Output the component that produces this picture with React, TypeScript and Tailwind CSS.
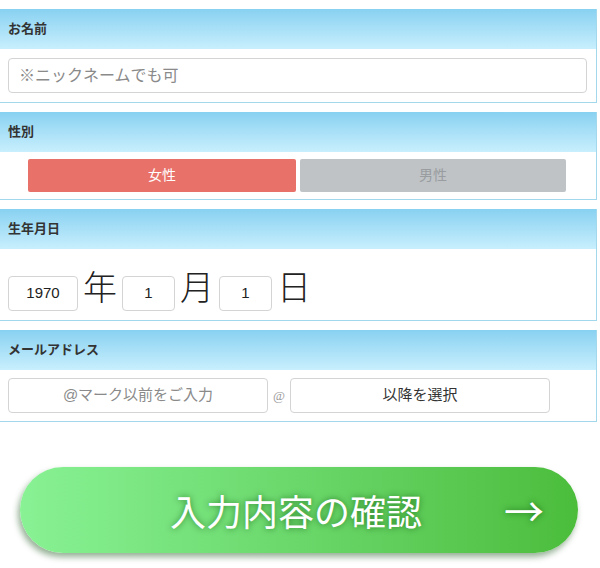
import React from "react";

const SANS = "font-['Liberation_Sans','Noto_Sans_CJK_JP',sans-serif]";
const SERIF = "font-['Liberation_Serif','Noto_Sans_CJK_JP',serif]";
const CJK = "font-['Noto_Sans_CJK_JP',sans-serif]";

function Header({ label }: { label: string }) {
  return (
    <div
      className={`flex h-[40px] items-center bg-gradient-to-b from-[#88d1f1] to-[#c8effd] pl-[8px] text-[13px] font-bold text-[#333] ${SERIF}`}
    >
      {label}
    </div>
  );
}

function Section({
  label,
  children,
  bodyClass,
}: {
  label: string;
  children: React.ReactNode;
  bodyClass: string;
}) {
  return (
    <div className="w-[597px] border-r border-b border-[#a3d8ec] bg-white">
      <Header label={label} />
      <div className={bodyClass}>{children}</div>
    </div>
  );
}

export default function App() {
  return (
    <div className={`w-[600px] bg-white pt-[9px] pb-[15px] ${SANS}`}>
      <div className="flex flex-col gap-[9px]">
        <Section label="お名前" bodyClass="px-[8px] pt-[9px] pb-[9px]">
          <div className="flex h-[35px] w-[579px] items-center rounded-[4px] border border-[#d4d4d4] bg-white pl-[10px] text-[16px] text-[#8a8a8a]">
            ※ニックネームでも可
          </div>
        </Section>

        <Section label="性別" bodyClass="flex gap-[4px] pl-[28px] pt-[7px] pb-[7px]">
          <div className="flex h-[33px] w-[268px] items-center justify-center rounded-[2px] bg-[#e8716a] text-[14px] text-white">
            女性
          </div>
          <div className="flex h-[33px] w-[266px] items-center justify-center rounded-[2px] bg-[#bfc3c6] text-[14px] text-[#999da0]">
            男性
          </div>
        </Section>

        <Section label="生年月日" bodyClass="flex items-end px-[8px] pt-[18px] pb-[9px]">
          <div className="flex h-[35px] w-[70px] items-center justify-center rounded-[4px] border border-[#d4d4d4] text-[15px] text-[#222]">
            1970
          </div>
          <span className={`mx-[5px] mb-[6px] text-[34px] font-light leading-[38px] text-[#222] ${CJK}`}>年</span>
          <div className="flex h-[35px] w-[53px] items-center justify-center rounded-[4px] border border-[#d4d4d4] text-[15px] text-[#222]">
            1
          </div>
          <span className={`mx-[5px] mb-[6px] text-[34px] font-light leading-[38px] text-[#222] ${CJK}`}>月</span>
          <div className="flex h-[35px] w-[53px] items-center justify-center rounded-[4px] border border-[#d4d4d4] text-[15px] text-[#222]">
            1
          </div>
          <span className={`ml-[5px] mb-[6px] text-[34px] font-light leading-[38px] text-[#222] ${CJK}`}>日</span>
        </Section>

        <Section label="メールアドレス" bodyClass="flex items-center px-[8px] pt-[8px] pb-[8px]">
          <div className="flex h-[35px] w-[260px] items-center justify-center rounded-[4px] border border-[#d4d4d4] text-[15px] text-[#8a8a8a]">
            @マーク以前をご入力
          </div>
          <span className={`mx-[4px] w-[14px] text-center text-[13px] text-[#999] ${SERIF}`}>@</span>
          <div className="flex h-[35px] w-[260px] items-center justify-center rounded-[4px] border border-[#d4d4d4] text-[15px] text-[#333]">
            以降を選択
          </div>
        </Section>
      </div>

      <div className="mt-[45px] pl-[20px]">
        <div className="relative flex h-[86px] w-[558px] items-center justify-center rounded-full bg-gradient-to-r from-[#88f294] to-[#4bbd3b] shadow-[-2px_4px_6px_rgba(20,80,20,0.45)]">
          <span
            className={`pr-[6px] text-[36px] text-white [text-shadow:0_0_6px_rgba(0,70,0,0.6)] ${CJK}`}
          >
            入力内容の確認
          </span>
          <span
            className={`absolute right-[34px] top-1/2 -translate-y-1/2 text-[40px] leading-none text-white [text-shadow:0_0_6px_rgba(0,70,0,0.6)] ${CJK}`}
          >
            →
          </span>
        </div>
      </div>
    </div>
  );
}
